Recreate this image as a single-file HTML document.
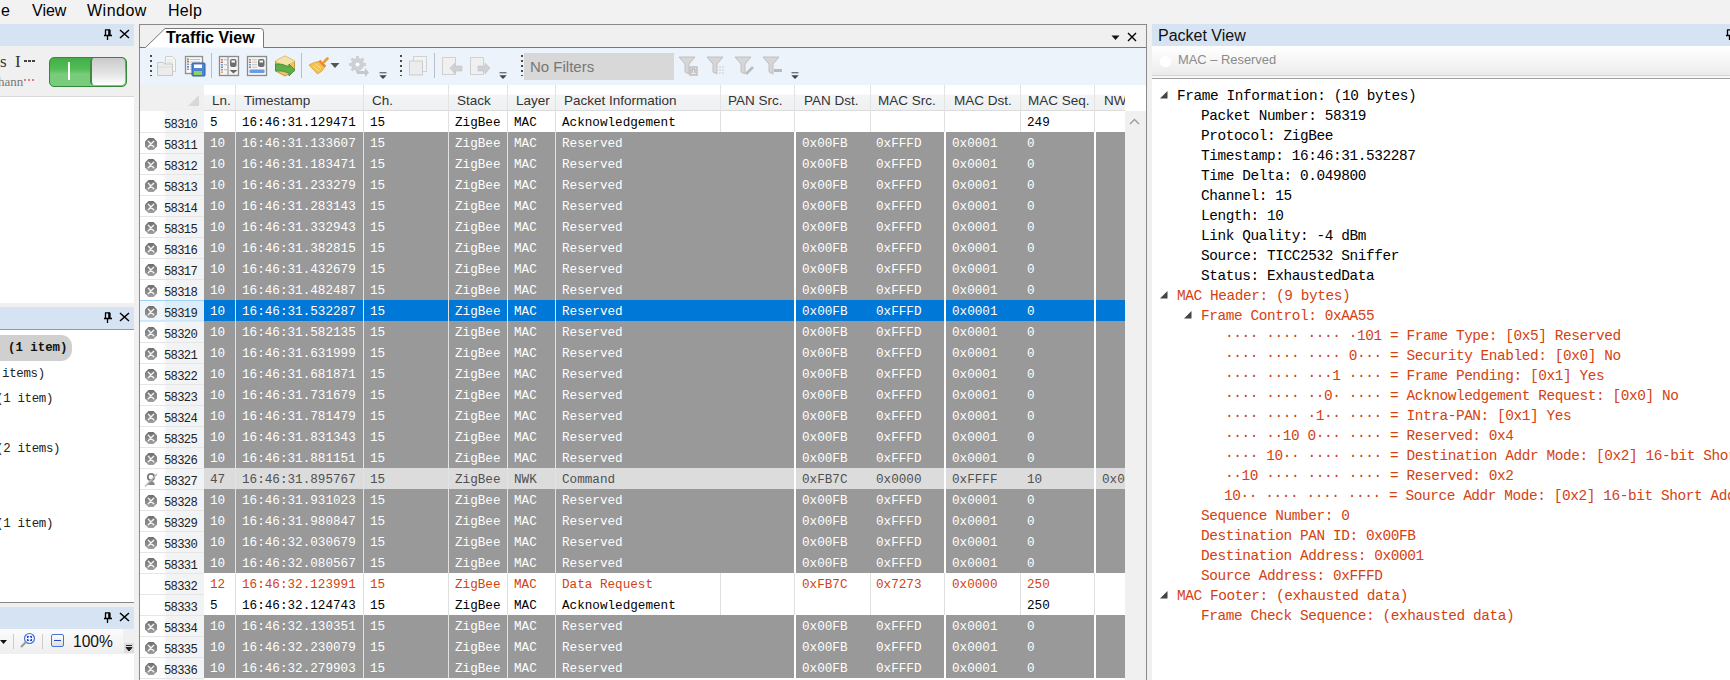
<!DOCTYPE html><html><head><meta charset="utf-8"><style>
*{margin:0;padding:0;box-sizing:border-box}
html,body{width:1730px;height:680px;overflow:hidden;background:#f0f0f0;font-family:'Liberation Sans', sans-serif;position:relative}
.ab{position:absolute}
.t{position:absolute;white-space:pre;line-height:1}
.m{font-family:'Liberation Mono', monospace}
.hdr{background:#d6e3f2}
.cell{position:absolute;white-space:pre;font-family:'Liberation Mono', monospace;font-size:12.65px;line-height:23px}
.ch{position:absolute;white-space:pre;font-family:'Liberation Sans', sans-serif;font-size:13.5px;line-height:26px;color:#333}
.pv{position:absolute;white-space:pre;font-family:'Liberation Mono', monospace;font-size:14.4px;letter-spacing:-0.39px;line-height:20px}
.red{color:#d4410f}
</style></head><body>
<div class="ab" style="left:0;top:0;width:1730px;height:24px;background:#f2f2f2"></div>
<div class="t" style="left:1px;top:3px;font-size:16px;letter-spacing:0px;color:#000">e</div>
<div class="t" style="left:32px;top:3px;font-size:16px;letter-spacing:0px;color:#000">View</div>
<div class="t" style="left:87px;top:3px;font-size:16px;letter-spacing:0.5px;color:#000">Window</div>
<div class="t" style="left:168px;top:3px;font-size:16px;letter-spacing:0.3px;color:#000">Help</div>
<div class="ab hdr" style="left:0;top:24px;width:134px;height:22px"></div>
<svg class="ab" style="left:103px;top:29px" width="10" height="12" viewBox="0 0 10 12"><path d="M2.5 0.8v5.4M2 0.8h5M7 0.8v5.4M1 6.5h8M4.5 6.5v4.5" stroke="#000" stroke-width="1.3" fill="none"/><rect x="5.2" y="0.8" width="1.8" height="5.5" fill="#000"/></svg>
<svg class="ab" style="left:119px;top:29px" width="11" height="10" viewBox="0 0 11 10"><path d="M1 1L10 9M10 1L1 9" stroke="#000" stroke-width="1.5"/></svg>
<div class="t" style="left:0px;top:53px;font-family:'Liberation Serif', serif;font-size:17px;color:#333">s</div>
<div class="t" style="left:15px;top:53px;font-family:'Liberation Serif', serif;font-size:17px;color:#333">I</div>
<div class="ab" style="left:24px;top:60px;width:12px;height:2px;background:repeating-linear-gradient(90deg,#444 0,#444 3px,transparent 3px,transparent 4px)"></div>
<div class="t" style="left:-2px;top:75px;font-family:'Liberation Serif', serif;font-size:13px;color:#777">hann</div>
<div class="ab" style="left:24px;top:79px;width:10px;height:2px;background:repeating-linear-gradient(90deg,#e77 0,#e77 2px,transparent 2px,transparent 4px)"></div>
<div class="ab" style="left:49px;top:57px;width:78px;height:30px;border-radius:5px;background:linear-gradient(#45ac49,#50be55 40%,#7acb7c 58%,#78cc7b);border:1px solid #33883a"></div>
<div class="ab" style="left:68px;top:62px;width:2px;height:18px;background:#fff"></div>
<div class="ab" style="left:90px;top:58px;width:35px;height:27px;border-radius:4px;background:linear-gradient(#cbcbcb,#e2e2e2 55%,#fff);border-left:2px solid #3c8a40"></div>
<div class="ab" style="left:0;top:96px;width:134px;height:1px;background:#d9d9d9"></div>
<div class="ab" style="left:0;top:97px;width:134px;height:206px;background:#fff"></div>
<div class="ab hdr" style="left:0;top:307px;width:134px;height:22px"></div>
<div class="ab" style="left:0;top:329px;width:134px;height:1px;background:#8c9aa8"></div>
<svg class="ab" style="left:103px;top:312px" width="10" height="12" viewBox="0 0 10 12"><path d="M2.5 0.8v5.4M2 0.8h5M7 0.8v5.4M1 6.5h8M4.5 6.5v4.5" stroke="#000" stroke-width="1.3" fill="none"/><rect x="5.2" y="0.8" width="1.8" height="5.5" fill="#000"/></svg>
<svg class="ab" style="left:119px;top:312px" width="11" height="10" viewBox="0 0 11 10"><path d="M1 1L10 9M10 1L1 9" stroke="#000" stroke-width="1.5"/></svg>
<div class="ab" style="left:0;top:330px;width:134px;height:272px;background:#fff"></div>
<div class="ab" style="left:-10px;top:335px;width:82px;height:26px;border-radius:11px;background:#d0d0d0"></div>
<div class="t" style="left:8px;top:342px;font-family:'Liberation Mono', monospace;font-weight:bold;font-size:12.4px;color:#111">(1 item)</div>
<div class="t" style="left:2px;top:368px;font-family:'Liberation Mono', monospace;font-size:12.4px;letter-spacing:-0.3px;color:#222">items)</div>
<div class="t" style="left:-4px;top:393px;font-family:'Liberation Mono', monospace;font-size:12.4px;letter-spacing:-0.3px;color:#222">(1 item)</div>
<div class="t" style="left:-4px;top:443px;font-family:'Liberation Mono', monospace;font-size:12.4px;letter-spacing:-0.3px;color:#222">(2 items)</div>
<div class="t" style="left:-4px;top:518px;font-family:'Liberation Mono', monospace;font-size:12.4px;letter-spacing:-0.3px;color:#222">(1 item)</div>
<div class="ab" style="left:0;top:602px;width:134px;height:1px;background:#888"></div>
<div class="ab hdr" style="left:0;top:607px;width:134px;height:22px"></div>
<svg class="ab" style="left:103px;top:612px" width="10" height="12" viewBox="0 0 10 12"><path d="M2.5 0.8v5.4M2 0.8h5M7 0.8v5.4M1 6.5h8M4.5 6.5v4.5" stroke="#000" stroke-width="1.3" fill="none"/><rect x="5.2" y="0.8" width="1.8" height="5.5" fill="#000"/></svg>
<svg class="ab" style="left:119px;top:612px" width="11" height="10" viewBox="0 0 11 10"><path d="M1 1L10 9M10 1L1 9" stroke="#000" stroke-width="1.5"/></svg>
<div class="ab" style="left:0;top:629px;width:123px;height:25px;background:linear-gradient(#fbfbfb,#efefef)"></div>
<div class="ab" style="left:0;top:654px;width:134px;height:26px;background:#fff"></div>
<svg class="ab" style="left:0;top:639px" width="8" height="6"><path d="M0 1h7L3.5 5z" fill="#111"/></svg>
<div class="ab" style="left:13px;top:634px;width:1px;height:15px;background:#ccc"></div>
<svg class="ab" style="left:19px;top:632px" width="18" height="18" viewBox="0 0 18 18"><circle cx="10.5" cy="6.5" r="5" fill="#eef4ff" stroke="#4a72e0" stroke-width="1.2"/><path d="M7 10L2 15" stroke="#999" stroke-width="2"/><path d="M8.6 5.9V4.6H9.9M11.1 4.6H12.4V5.9M12.4 7.1V8.4H11.1M9.9 8.4H8.6V7.1" stroke="#1f44c0" stroke-width="1.2" fill="none"/></svg>
<div class="ab" style="left:42px;top:634px;width:1px;height:15px;background:#ccc"></div>
<div class="ab" style="left:51px;top:634px;width:13px;height:13px;border:1.5px solid #4a72d8;border-radius:2px;background:linear-gradient(#fff,#ddd)"></div>
<div class="ab" style="left:54px;top:640px;width:7px;height:1.3px;background:#2a4cb8"></div>
<div class="t" style="left:73px;top:634px;font-size:15.6px;color:#111">100%</div>
<div class="ab" style="left:124px;top:643px;width:10px;height:10px;background:#ddd"></div>
<svg class="ab" style="left:125px;top:645px" width="8" height="7"><path d="M1 0.5h6M1 2.5h6L4 6z" stroke="#222" fill="#222" stroke-width="1"/></svg>
<div class="ab" style="left:134px;top:24px;width:6px;height:656px;background:#f0f0f0"></div>
<div class="ab" style="left:139px;top:24px;width:1008px;height:656px;border:1px solid #8a8a8a;border-bottom:none;background:#f0f0f0"></div>
<svg class="ab" style="left:139px;top:24px" width="1007" height="25"><path d="M6.5 23.5 L26 4.5 L121.5 4.5 Q124.5 4.5 124.5 7.5 L124.5 23.5" fill="#fff" stroke="#777" stroke-width="1"/><path d="M0 23.5H6.5M124.5 23.5H1007" stroke="#777" stroke-width="1.2"/></svg>
<div class="t" style="left:166px;top:30px;font-size:16px;font-weight:bold;color:#000">Traffic View</div>
<svg class="ab" style="left:1111px;top:35px" width="10" height="6"><path d="M0.5 0.5h8L4.5 5z" fill="#111"/></svg>
<svg class="ab" style="left:1127px;top:32px" width="10" height="10" viewBox="0 0 10 10"><path d="M1 1L9 9M9 1L1 9" stroke="#000" stroke-width="1.4"/></svg>
<div class="ab" style="left:140px;top:48px;width:1006px;height:37px;background:#edf3fb"></div>
<svg class="ab" style="left:150px;top:55px" width="3" height="22"><rect x="0" y="0" width="2" height="2" fill="#4a4a4a"/><rect x="0" y="5" width="2" height="2" fill="#4a4a4a"/><rect x="0" y="10" width="2" height="2" fill="#4a4a4a"/><rect x="0" y="15" width="2" height="2" fill="#4a4a4a"/><rect x="0" y="20" width="2" height="1" fill="#4a4a4a"/></svg>
<svg class="ab" style="left:156px;top:55px" width="22" height="22" viewBox="0 0 22 22"><path d="M9.5 1.5h7l3 3v12h-10z" fill="#f6f6f6" stroke="#cfcfcf"/><path d="M11 5h6M11 7.5h6M11 10h6" stroke="#e0e0e0"/><path d="M1.5 7.5h6l1 1.5h8v11.5h-15z" fill="#ececec" stroke="#c9c9c9"/><path d="M2 12h14" stroke="#dcdcdc"/></svg>
<svg class="ab" style="left:184px;top:55px" width="22" height="22" viewBox="0 0 22 22"><rect x="1.5" y="1.5" width="17" height="17" fill="#f7f7f7" stroke="#8f8f8f" stroke-width="1.3"/><rect x="3" y="3.5" width="2" height="2" fill="#58b858"/><rect x="3" y="6" width="2" height="1.5" fill="#e06060"/><rect x="3" y="8.5" width="2" height="1.5" fill="#6a9ae8"/><rect x="3" y="11" width="2" height="1.5" fill="#777"/><rect x="3" y="13.5" width="2" height="1.5" fill="#6a9ae8"/><path d="M6 4.5h10M6 7h10M6 9.5h4M6 12h4M6 14.5h4" stroke="#c4c4c4"/><rect x="8" y="8" width="13" height="13" rx="1" fill="#4f84d2" stroke="#2e5fae"/><rect x="10" y="9.5" width="8" height="3.5" fill="#fff"/><rect x="10" y="16" width="8" height="4" fill="#8fd060"/></svg>
<div class="ab" style="left:211px;top:53px;width:1px;height:25px;background:#b9bfc8"></div>
<svg class="ab" style="left:218px;top:55px" width="22" height="22" viewBox="0 0 22 22"><rect x="1.5" y="1.5" width="19" height="19" fill="#f4f4f4" stroke="#8a8a8a" stroke-width="1.3"/><path d="M10 1.5v19" stroke="#9a9a9a" stroke-width="1.2"/><rect x="3" y="4" width="2" height="1.5" fill="#58b858"/><rect x="3" y="6.5" width="2" height="1.5" fill="#e06060"/><rect x="3" y="9" width="2" height="1.5" fill="#6a9ae8"/><rect x="3" y="11.5" width="2" height="1.5" fill="#888"/><rect x="3" y="14" width="2" height="1.5" fill="#6a9ae8"/><rect x="3" y="16.5" width="2" height="1.5" fill="#f0a040"/><path d="M6 4.7h3M6 9.7h3M6 14.7h3" stroke="#bbb"/><rect x="12" y="4" width="6.5" height="8" rx="2" fill="#6e6e6e"/><rect x="13.5" y="5.5" width="3.5" height="2" fill="#fff"/><path d="M11.5 15h8l-4 3.5z" fill="#666"/></svg>
<svg class="ab" style="left:246px;top:55px" width="22" height="22" viewBox="0 0 22 22"><rect x="1.5" y="1.5" width="19" height="19" fill="#f4f4f4" stroke="#8a8a8a" stroke-width="1.3"/><rect x="3" y="4" width="2" height="1.5" fill="#58b858"/><rect x="3" y="6.5" width="2" height="1.5" fill="#e06060"/><rect x="3" y="9" width="2" height="1.5" fill="#6a9ae8"/><rect x="3" y="11.5" width="2" height="1.5" fill="#888"/><path d="M6 4.7h5M6 7.2h5M6 9.7h5M6 12.2h5" stroke="#c4c4c4"/><rect x="12" y="4" width="6.5" height="8" rx="2" fill="#6e6e6e"/><rect x="13.5" y="5.5" width="3.5" height="2" fill="#fff"/><rect x="3.5" y="14.5" width="15" height="3.5" rx="1" fill="#6b9be0"/></svg>
<svg class="ab" style="left:274px;top:55px" width="22" height="22" viewBox="0 0 22 22"><path d="M11 1L20.5 6V16L11 21L1.5 16V6Z" fill="#e9c468" stroke="#c99a38"/><path d="M11 1L20.5 6L11 11L1.5 6Z" fill="#f6e2a8"/><path d="M1.5 9Q8 8 15 12V9L21 15L15 21V18Q8 15 1.5 16Z" fill="#5fae4a" stroke="#3b8a2e" stroke-width="0.8"/></svg>
<div class="ab" style="left:301px;top:53px;width:1px;height:25px;background:#b9bfc8"></div>
<svg class="ab" style="left:308px;top:56px" width="34" height="20" viewBox="0 0 34 20"><path d="M19.5 2.5L16 6" stroke="#e0a040" stroke-width="2.6" stroke-linecap="round"/><path d="M11 5L17 11" stroke="#e88a3a" stroke-width="3.5"/><path d="M1 9Q6 6 10.5 5.5L16.5 11.5Q14 16 9.5 18Z" fill="#f2c24a" stroke="#d9a030" stroke-width="0.8"/><path d="M5 10L11 15M7.5 8L13 12.5" stroke="#fbe29a" stroke-width="1"/><path d="M22.5 7h9l-4.5 5z" fill="#555"/></svg>
<svg class="ab" style="left:348px;top:55px" width="22" height="22" viewBox="0 0 22 22"><g fill="#cdd0d4"><circle cx="9.5" cy="9.5" r="6.5"/><rect x="8" y="1" width="3" height="4"/><rect x="8" y="14" width="3" height="4"/><rect x="1" y="8" width="4" height="3"/><rect x="14" y="8" width="4" height="3"/><rect x="3" y="3" width="3" height="3" transform="rotate(45 4.5 4.5)"/><rect x="13" y="3" width="3" height="3" transform="rotate(45 14.5 4.5)"/><rect x="3" y="13" width="3" height="3" transform="rotate(45 4.5 14.5)"/></g><circle cx="9.5" cy="9.5" r="2" fill="#fff"/><path d="M9 16h8v-3l4 4.5-4 4.5v-3H9z" fill="#c4c7cc"/></svg>
<svg class="ab" style="left:379px;top:72px" width="8" height="8"><rect x="0.5" y="0.2" width="7" height="1.1" fill="#555"/><path d="M0.3 3.2h7.4L4 7z" fill="#444"/></svg>
<svg class="ab" style="left:400px;top:55px" width="3" height="22"><rect x="0" y="0" width="2" height="2" fill="#4a4a4a"/><rect x="0" y="5" width="2" height="2" fill="#4a4a4a"/><rect x="0" y="10" width="2" height="2" fill="#4a4a4a"/><rect x="0" y="15" width="2" height="2" fill="#4a4a4a"/><rect x="0" y="20" width="2" height="1" fill="#4a4a4a"/></svg>
<svg class="ab" style="left:408px;top:55px" width="20" height="22" viewBox="0 0 20 22"><rect x="5.5" y="1.5" width="13" height="15" fill="#f3f3f3" stroke="#d2d2d2"/><rect x="1.5" y="6" width="13" height="14" fill="#ececec" stroke="#cdcdcd"/></svg>
<div class="ab" style="left:434px;top:53px;width:1px;height:25px;background:#b9bfc8"></div>
<svg class="ab" style="left:441px;top:55px" width="22" height="22" viewBox="0 0 22 22"><path d="M1.5 2.5h13v17h-13z" fill="#f0f0f0" stroke="#d0d0d0"/><path d="M9 13l5-5v3h7v5h-7v3z" fill="#cfd1d4" stroke="#c0c2c6" stroke-width="0.6"/></svg>
<svg class="ab" style="left:469px;top:55px" width="22" height="22" viewBox="0 0 22 22"><path d="M1.5 2.5h13v17h-13z" fill="#f0f0f0" stroke="#d0d0d0"/><path d="M21 13l-5-5v3h-7v5h7v3z" fill="#cfd1d4" stroke="#c0c2c6" stroke-width="0.6"/></svg>
<svg class="ab" style="left:499px;top:72px" width="8" height="8"><rect x="0.5" y="0.2" width="7" height="1.1" fill="#555"/><path d="M0.3 3.2h7.4L4 7z" fill="#444"/></svg>
<svg class="ab" style="left:521px;top:55px" width="3" height="22"><rect x="0" y="0" width="2" height="2" fill="#4a4a4a"/><rect x="0" y="5" width="2" height="2" fill="#4a4a4a"/><rect x="0" y="10" width="2" height="2" fill="#4a4a4a"/><rect x="0" y="15" width="2" height="2" fill="#4a4a4a"/><rect x="0" y="20" width="2" height="1" fill="#4a4a4a"/></svg>
<div class="ab" style="left:524px;top:53px;width:150px;height:27px;background:#d8d8d8"></div>
<div class="t" style="left:530px;top:59px;font-size:15px;color:#777">No Filters</div>
<svg class="ab" style="left:678px;top:55px" width="22" height="22" viewBox="0 0 22 22"><path d="M1 2h16l-6 7v10l-4-2V9Z" fill="#d6d6d6" stroke="#c0c0c0"/><rect x="12" y="12" width="7" height="8" fill="#e6e6e6" stroke="#b8b8b8" stroke-width="1.3"/><path d="M14 18v-4h3v4" stroke="#aaa" fill="none"/></svg>
<svg class="ab" style="left:706px;top:55px" width="22" height="22" viewBox="0 0 22 22"><path d="M1 2h16l-6 7v10l-4-2V9Z" fill="#d6d6d6" stroke="#c0c0c0"/><path d="M13 12h6M13 15h6M13 18h6" stroke="#ccc" stroke-dasharray="2 1"/></svg>
<svg class="ab" style="left:734px;top:55px" width="22" height="22" viewBox="0 0 22 22"><path d="M1 2h16l-6 7v10l-4-2V9Z" fill="#d6d6d6" stroke="#c0c0c0"/><path d="M12 19L19 12" stroke="#bbb" stroke-width="2.5"/></svg>
<svg class="ab" style="left:762px;top:55px" width="22" height="22" viewBox="0 0 22 22"><path d="M1 2h16l-6 7v10l-4-2V9Z" fill="#d6d6d6" stroke="#c0c0c0"/><rect x="12" y="14" width="8" height="3" fill="#bbb"/></svg>
<svg class="ab" style="left:791px;top:72px" width="8" height="8"><rect x="0.5" y="0.2" width="7" height="1.1" fill="#555"/><path d="M0.3 3.2h7.4L4 7z" fill="#444"/></svg>
<div class="ab" style="left:140px;top:85px;width:64px;height:26px;background:#f0f0f0"></div>
<svg class="ab" style="left:187px;top:94px" width="13" height="13"><path d="M12 1V12H1Z" fill="#d8d8d8"/></svg>
<div class="ab" style="left:204px;top:85px;width:921px;height:26px;background:linear-gradient(#ffffff 0,#ffffff 36%,#f3f4f6 42%,#eef0f2 100%);border-bottom:1px solid #dcdcdc"></div>
<div class="ab" style="left:235px;top:85px;width:1px;height:26px;background:#e3e3e3"></div>
<div class="ab" style="left:363px;top:85px;width:1px;height:26px;background:#e3e3e3"></div>
<div class="ab" style="left:448px;top:85px;width:1px;height:26px;background:#e3e3e3"></div>
<div class="ab" style="left:507px;top:85px;width:1px;height:26px;background:#e3e3e3"></div>
<div class="ab" style="left:555px;top:85px;width:1px;height:26px;background:#e3e3e3"></div>
<div class="ab" style="left:720px;top:85px;width:1px;height:26px;background:#e3e3e3"></div>
<div class="ab" style="left:794px;top:85px;width:1px;height:26px;background:#e3e3e3"></div>
<div class="ab" style="left:870px;top:85px;width:1px;height:26px;background:#e3e3e3"></div>
<div class="ab" style="left:944px;top:85px;width:1px;height:26px;background:#e3e3e3"></div>
<div class="ab" style="left:1020px;top:85px;width:1px;height:26px;background:#e3e3e3"></div>
<div class="ab" style="left:1094px;top:85px;width:1px;height:26px;background:#e3e3e3"></div>
<div class="ch" style="left:212px;top:88px">Ln.</div>
<div class="ch" style="left:244px;top:88px">Timestamp</div>
<div class="ch" style="left:372px;top:88px">Ch.</div>
<div class="ch" style="left:457px;top:88px">Stack</div>
<div class="ch" style="left:516px;top:88px">Layer</div>
<div class="ch" style="left:564px;top:88px">Packet Information</div>
<div class="ch" style="left:728px;top:88px">PAN Src.</div>
<div class="ch" style="left:804px;top:88px">PAN Dst.</div>
<div class="ch" style="left:878px;top:88px">MAC Src.</div>
<div class="ch" style="left:954px;top:88px">MAC Dst.</div>
<div class="ch" style="left:1028px;top:88px">MAC Seq.</div>
<div class="ch" style="left:1104px;top:88px">NW</div>
<div class="ab" style="left:1125px;top:85px;width:21px;height:26px;background:#fff"></div>
<div class="ab" style="left:204px;top:111px;width:921px;height:569px;background:#fff"></div>
<div class="ab" style="left:140px;top:111px;width:64px;height:569px;background:linear-gradient(90deg,#fff 0,#fff 23px,#f2f3f5 27px,#f2f3f5)"></div>
<div class="ab" style="left:140px;top:132px;width:64px;height:1px;background:#e6e6e6"></div>
<div class="t m" style="left:141px;top:111px;width:56px;text-align:right;font-size:12.2px;letter-spacing:-0.7px;line-height:28px;color:#222">58310</div>
<div class="ab" style="left:204px;top:111px;width:921px;height:21px;background:#fff"></div>
<div class="ab" style="left:235px;top:111px;width:1px;height:21px;background:#dfdfdf"></div>
<div class="ab" style="left:363px;top:111px;width:1px;height:21px;background:#dfdfdf"></div>
<div class="ab" style="left:448px;top:111px;width:1px;height:21px;background:#dfdfdf"></div>
<div class="ab" style="left:507px;top:111px;width:1px;height:21px;background:#dfdfdf"></div>
<div class="ab" style="left:555px;top:111px;width:1px;height:21px;background:#dfdfdf"></div>
<div class="ab" style="left:720px;top:111px;width:1px;height:21px;background:#dfdfdf"></div>
<div class="ab" style="left:794px;top:111px;width:1px;height:21px;background:#dfdfdf"></div>
<div class="ab" style="left:870px;top:111px;width:1px;height:21px;background:#dfdfdf"></div>
<div class="ab" style="left:944px;top:111px;width:1px;height:21px;background:#dfdfdf"></div>
<div class="ab" style="left:1020px;top:111px;width:1px;height:21px;background:#dfdfdf"></div>
<div class="ab" style="left:1094px;top:111px;width:1px;height:21px;background:#dfdfdf"></div>
<div class="cell" style="left:210px;top:111px;color:#000">5</div>
<div class="cell" style="left:242px;top:111px;color:#000">16:46:31.129471</div>
<div class="cell" style="left:370px;top:111px;color:#000">15</div>
<div class="cell" style="left:455px;top:111px;color:#000">ZigBee</div>
<div class="cell" style="left:514px;top:111px;color:#000">MAC</div>
<div class="cell" style="left:562px;top:111px;color:#000">Acknowledgement</div>
<div class="cell" style="left:1027px;top:111px;color:#000">249</div>
<div class="ab" style="left:140px;top:153px;width:64px;height:1px;background:#e6e6e6"></div>
<div class="t m" style="left:141px;top:132px;width:56px;text-align:right;font-size:12.2px;letter-spacing:-0.7px;line-height:28px;color:#222">58311</div>
<svg class="ab" style="left:145px;top:138px" width="12" height="12" viewBox="0 0 12 12"><defs><linearGradient id="og1" x1="0" y1="0" x2="0" y2="1"><stop offset="0" stop-color="#6e6e6e"/><stop offset="1" stop-color="#a0a0a0"/></linearGradient></defs><path d="M3.5 0H8.5L12 3.5V8.5L8.5 12H3.5L0 8.5V3.5Z" fill="url(#og1)"/><path d="M3.3 3.3L8.7 8.7M8.7 3.3L3.3 8.7" stroke="#f4f4f4" stroke-width="1.4" stroke-linecap="round"/></svg>
<div class="ab" style="left:204px;top:132px;width:921px;height:21px;background:#999999"></div>
<div class="ab" style="left:235px;top:132px;width:1px;height:21px;background:#e2e2e2"></div>
<div class="ab" style="left:363px;top:132px;width:1px;height:21px;background:#e2e2e2"></div>
<div class="ab" style="left:448px;top:132px;width:1px;height:21px;background:#e2e2e2"></div>
<div class="ab" style="left:507px;top:132px;width:1px;height:21px;background:#e2e2e2"></div>
<div class="ab" style="left:555px;top:132px;width:1px;height:21px;background:#e2e2e2"></div>
<div class="ab" style="left:794px;top:132px;width:2px;height:21px;background:#fff"></div>
<div class="ab" style="left:944px;top:132px;width:2px;height:21px;background:#fff"></div>
<div class="ab" style="left:1094px;top:132px;width:2px;height:21px;background:#fff"></div>
<div class="cell" style="left:210px;top:132px;color:#fff">10</div>
<div class="cell" style="left:242px;top:132px;color:#fff">16:46:31.133607</div>
<div class="cell" style="left:370px;top:132px;color:#fff">15</div>
<div class="cell" style="left:455px;top:132px;color:#fff">ZigBee</div>
<div class="cell" style="left:514px;top:132px;color:#fff">MAC</div>
<div class="cell" style="left:562px;top:132px;color:#fff">Reserved</div>
<div class="cell" style="left:802px;top:132px;color:#fff">0x00FB</div>
<div class="cell" style="left:876px;top:132px;color:#fff">0xFFFD</div>
<div class="cell" style="left:952px;top:132px;color:#fff">0x0001</div>
<div class="cell" style="left:1027px;top:132px;color:#fff">0</div>
<div class="ab" style="left:140px;top:174px;width:64px;height:1px;background:#e6e6e6"></div>
<div class="t m" style="left:141px;top:153px;width:56px;text-align:right;font-size:12.2px;letter-spacing:-0.7px;line-height:28px;color:#222">58312</div>
<svg class="ab" style="left:145px;top:159px" width="12" height="12" viewBox="0 0 12 12"><defs><linearGradient id="og2" x1="0" y1="0" x2="0" y2="1"><stop offset="0" stop-color="#6e6e6e"/><stop offset="1" stop-color="#a0a0a0"/></linearGradient></defs><path d="M3.5 0H8.5L12 3.5V8.5L8.5 12H3.5L0 8.5V3.5Z" fill="url(#og2)"/><path d="M3.3 3.3L8.7 8.7M8.7 3.3L3.3 8.7" stroke="#f4f4f4" stroke-width="1.4" stroke-linecap="round"/></svg>
<div class="ab" style="left:204px;top:153px;width:921px;height:21px;background:#999999"></div>
<div class="ab" style="left:235px;top:153px;width:1px;height:21px;background:#e2e2e2"></div>
<div class="ab" style="left:363px;top:153px;width:1px;height:21px;background:#e2e2e2"></div>
<div class="ab" style="left:448px;top:153px;width:1px;height:21px;background:#e2e2e2"></div>
<div class="ab" style="left:507px;top:153px;width:1px;height:21px;background:#e2e2e2"></div>
<div class="ab" style="left:555px;top:153px;width:1px;height:21px;background:#e2e2e2"></div>
<div class="ab" style="left:794px;top:153px;width:2px;height:21px;background:#fff"></div>
<div class="ab" style="left:944px;top:153px;width:2px;height:21px;background:#fff"></div>
<div class="ab" style="left:1094px;top:153px;width:2px;height:21px;background:#fff"></div>
<div class="cell" style="left:210px;top:153px;color:#fff">10</div>
<div class="cell" style="left:242px;top:153px;color:#fff">16:46:31.183471</div>
<div class="cell" style="left:370px;top:153px;color:#fff">15</div>
<div class="cell" style="left:455px;top:153px;color:#fff">ZigBee</div>
<div class="cell" style="left:514px;top:153px;color:#fff">MAC</div>
<div class="cell" style="left:562px;top:153px;color:#fff">Reserved</div>
<div class="cell" style="left:802px;top:153px;color:#fff">0x00FB</div>
<div class="cell" style="left:876px;top:153px;color:#fff">0xFFFD</div>
<div class="cell" style="left:952px;top:153px;color:#fff">0x0001</div>
<div class="cell" style="left:1027px;top:153px;color:#fff">0</div>
<div class="ab" style="left:140px;top:195px;width:64px;height:1px;background:#e6e6e6"></div>
<div class="t m" style="left:141px;top:174px;width:56px;text-align:right;font-size:12.2px;letter-spacing:-0.7px;line-height:28px;color:#222">58313</div>
<svg class="ab" style="left:145px;top:180px" width="12" height="12" viewBox="0 0 12 12"><defs><linearGradient id="og3" x1="0" y1="0" x2="0" y2="1"><stop offset="0" stop-color="#6e6e6e"/><stop offset="1" stop-color="#a0a0a0"/></linearGradient></defs><path d="M3.5 0H8.5L12 3.5V8.5L8.5 12H3.5L0 8.5V3.5Z" fill="url(#og3)"/><path d="M3.3 3.3L8.7 8.7M8.7 3.3L3.3 8.7" stroke="#f4f4f4" stroke-width="1.4" stroke-linecap="round"/></svg>
<div class="ab" style="left:204px;top:174px;width:921px;height:21px;background:#999999"></div>
<div class="ab" style="left:235px;top:174px;width:1px;height:21px;background:#e2e2e2"></div>
<div class="ab" style="left:363px;top:174px;width:1px;height:21px;background:#e2e2e2"></div>
<div class="ab" style="left:448px;top:174px;width:1px;height:21px;background:#e2e2e2"></div>
<div class="ab" style="left:507px;top:174px;width:1px;height:21px;background:#e2e2e2"></div>
<div class="ab" style="left:555px;top:174px;width:1px;height:21px;background:#e2e2e2"></div>
<div class="ab" style="left:794px;top:174px;width:2px;height:21px;background:#fff"></div>
<div class="ab" style="left:944px;top:174px;width:2px;height:21px;background:#fff"></div>
<div class="ab" style="left:1094px;top:174px;width:2px;height:21px;background:#fff"></div>
<div class="cell" style="left:210px;top:174px;color:#fff">10</div>
<div class="cell" style="left:242px;top:174px;color:#fff">16:46:31.233279</div>
<div class="cell" style="left:370px;top:174px;color:#fff">15</div>
<div class="cell" style="left:455px;top:174px;color:#fff">ZigBee</div>
<div class="cell" style="left:514px;top:174px;color:#fff">MAC</div>
<div class="cell" style="left:562px;top:174px;color:#fff">Reserved</div>
<div class="cell" style="left:802px;top:174px;color:#fff">0x00FB</div>
<div class="cell" style="left:876px;top:174px;color:#fff">0xFFFD</div>
<div class="cell" style="left:952px;top:174px;color:#fff">0x0001</div>
<div class="cell" style="left:1027px;top:174px;color:#fff">0</div>
<div class="ab" style="left:140px;top:216px;width:64px;height:1px;background:#e6e6e6"></div>
<div class="t m" style="left:141px;top:195px;width:56px;text-align:right;font-size:12.2px;letter-spacing:-0.7px;line-height:28px;color:#222">58314</div>
<svg class="ab" style="left:145px;top:201px" width="12" height="12" viewBox="0 0 12 12"><defs><linearGradient id="og4" x1="0" y1="0" x2="0" y2="1"><stop offset="0" stop-color="#6e6e6e"/><stop offset="1" stop-color="#a0a0a0"/></linearGradient></defs><path d="M3.5 0H8.5L12 3.5V8.5L8.5 12H3.5L0 8.5V3.5Z" fill="url(#og4)"/><path d="M3.3 3.3L8.7 8.7M8.7 3.3L3.3 8.7" stroke="#f4f4f4" stroke-width="1.4" stroke-linecap="round"/></svg>
<div class="ab" style="left:204px;top:195px;width:921px;height:21px;background:#999999"></div>
<div class="ab" style="left:235px;top:195px;width:1px;height:21px;background:#e2e2e2"></div>
<div class="ab" style="left:363px;top:195px;width:1px;height:21px;background:#e2e2e2"></div>
<div class="ab" style="left:448px;top:195px;width:1px;height:21px;background:#e2e2e2"></div>
<div class="ab" style="left:507px;top:195px;width:1px;height:21px;background:#e2e2e2"></div>
<div class="ab" style="left:555px;top:195px;width:1px;height:21px;background:#e2e2e2"></div>
<div class="ab" style="left:794px;top:195px;width:2px;height:21px;background:#fff"></div>
<div class="ab" style="left:944px;top:195px;width:2px;height:21px;background:#fff"></div>
<div class="ab" style="left:1094px;top:195px;width:2px;height:21px;background:#fff"></div>
<div class="cell" style="left:210px;top:195px;color:#fff">10</div>
<div class="cell" style="left:242px;top:195px;color:#fff">16:46:31.283143</div>
<div class="cell" style="left:370px;top:195px;color:#fff">15</div>
<div class="cell" style="left:455px;top:195px;color:#fff">ZigBee</div>
<div class="cell" style="left:514px;top:195px;color:#fff">MAC</div>
<div class="cell" style="left:562px;top:195px;color:#fff">Reserved</div>
<div class="cell" style="left:802px;top:195px;color:#fff">0x00FB</div>
<div class="cell" style="left:876px;top:195px;color:#fff">0xFFFD</div>
<div class="cell" style="left:952px;top:195px;color:#fff">0x0001</div>
<div class="cell" style="left:1027px;top:195px;color:#fff">0</div>
<div class="ab" style="left:140px;top:237px;width:64px;height:1px;background:#e6e6e6"></div>
<div class="t m" style="left:141px;top:216px;width:56px;text-align:right;font-size:12.2px;letter-spacing:-0.7px;line-height:28px;color:#222">58315</div>
<svg class="ab" style="left:145px;top:222px" width="12" height="12" viewBox="0 0 12 12"><defs><linearGradient id="og5" x1="0" y1="0" x2="0" y2="1"><stop offset="0" stop-color="#6e6e6e"/><stop offset="1" stop-color="#a0a0a0"/></linearGradient></defs><path d="M3.5 0H8.5L12 3.5V8.5L8.5 12H3.5L0 8.5V3.5Z" fill="url(#og5)"/><path d="M3.3 3.3L8.7 8.7M8.7 3.3L3.3 8.7" stroke="#f4f4f4" stroke-width="1.4" stroke-linecap="round"/></svg>
<div class="ab" style="left:204px;top:216px;width:921px;height:21px;background:#999999"></div>
<div class="ab" style="left:235px;top:216px;width:1px;height:21px;background:#e2e2e2"></div>
<div class="ab" style="left:363px;top:216px;width:1px;height:21px;background:#e2e2e2"></div>
<div class="ab" style="left:448px;top:216px;width:1px;height:21px;background:#e2e2e2"></div>
<div class="ab" style="left:507px;top:216px;width:1px;height:21px;background:#e2e2e2"></div>
<div class="ab" style="left:555px;top:216px;width:1px;height:21px;background:#e2e2e2"></div>
<div class="ab" style="left:794px;top:216px;width:2px;height:21px;background:#fff"></div>
<div class="ab" style="left:944px;top:216px;width:2px;height:21px;background:#fff"></div>
<div class="ab" style="left:1094px;top:216px;width:2px;height:21px;background:#fff"></div>
<div class="cell" style="left:210px;top:216px;color:#fff">10</div>
<div class="cell" style="left:242px;top:216px;color:#fff">16:46:31.332943</div>
<div class="cell" style="left:370px;top:216px;color:#fff">15</div>
<div class="cell" style="left:455px;top:216px;color:#fff">ZigBee</div>
<div class="cell" style="left:514px;top:216px;color:#fff">MAC</div>
<div class="cell" style="left:562px;top:216px;color:#fff">Reserved</div>
<div class="cell" style="left:802px;top:216px;color:#fff">0x00FB</div>
<div class="cell" style="left:876px;top:216px;color:#fff">0xFFFD</div>
<div class="cell" style="left:952px;top:216px;color:#fff">0x0001</div>
<div class="cell" style="left:1027px;top:216px;color:#fff">0</div>
<div class="ab" style="left:140px;top:258px;width:64px;height:1px;background:#e6e6e6"></div>
<div class="t m" style="left:141px;top:237px;width:56px;text-align:right;font-size:12.2px;letter-spacing:-0.7px;line-height:28px;color:#222">58316</div>
<svg class="ab" style="left:145px;top:243px" width="12" height="12" viewBox="0 0 12 12"><defs><linearGradient id="og6" x1="0" y1="0" x2="0" y2="1"><stop offset="0" stop-color="#6e6e6e"/><stop offset="1" stop-color="#a0a0a0"/></linearGradient></defs><path d="M3.5 0H8.5L12 3.5V8.5L8.5 12H3.5L0 8.5V3.5Z" fill="url(#og6)"/><path d="M3.3 3.3L8.7 8.7M8.7 3.3L3.3 8.7" stroke="#f4f4f4" stroke-width="1.4" stroke-linecap="round"/></svg>
<div class="ab" style="left:204px;top:237px;width:921px;height:21px;background:#999999"></div>
<div class="ab" style="left:235px;top:237px;width:1px;height:21px;background:#e2e2e2"></div>
<div class="ab" style="left:363px;top:237px;width:1px;height:21px;background:#e2e2e2"></div>
<div class="ab" style="left:448px;top:237px;width:1px;height:21px;background:#e2e2e2"></div>
<div class="ab" style="left:507px;top:237px;width:1px;height:21px;background:#e2e2e2"></div>
<div class="ab" style="left:555px;top:237px;width:1px;height:21px;background:#e2e2e2"></div>
<div class="ab" style="left:794px;top:237px;width:2px;height:21px;background:#fff"></div>
<div class="ab" style="left:944px;top:237px;width:2px;height:21px;background:#fff"></div>
<div class="ab" style="left:1094px;top:237px;width:2px;height:21px;background:#fff"></div>
<div class="cell" style="left:210px;top:237px;color:#fff">10</div>
<div class="cell" style="left:242px;top:237px;color:#fff">16:46:31.382815</div>
<div class="cell" style="left:370px;top:237px;color:#fff">15</div>
<div class="cell" style="left:455px;top:237px;color:#fff">ZigBee</div>
<div class="cell" style="left:514px;top:237px;color:#fff">MAC</div>
<div class="cell" style="left:562px;top:237px;color:#fff">Reserved</div>
<div class="cell" style="left:802px;top:237px;color:#fff">0x00FB</div>
<div class="cell" style="left:876px;top:237px;color:#fff">0xFFFD</div>
<div class="cell" style="left:952px;top:237px;color:#fff">0x0001</div>
<div class="cell" style="left:1027px;top:237px;color:#fff">0</div>
<div class="ab" style="left:140px;top:279px;width:64px;height:1px;background:#e6e6e6"></div>
<div class="t m" style="left:141px;top:258px;width:56px;text-align:right;font-size:12.2px;letter-spacing:-0.7px;line-height:28px;color:#222">58317</div>
<svg class="ab" style="left:145px;top:264px" width="12" height="12" viewBox="0 0 12 12"><defs><linearGradient id="og7" x1="0" y1="0" x2="0" y2="1"><stop offset="0" stop-color="#6e6e6e"/><stop offset="1" stop-color="#a0a0a0"/></linearGradient></defs><path d="M3.5 0H8.5L12 3.5V8.5L8.5 12H3.5L0 8.5V3.5Z" fill="url(#og7)"/><path d="M3.3 3.3L8.7 8.7M8.7 3.3L3.3 8.7" stroke="#f4f4f4" stroke-width="1.4" stroke-linecap="round"/></svg>
<div class="ab" style="left:204px;top:258px;width:921px;height:21px;background:#999999"></div>
<div class="ab" style="left:235px;top:258px;width:1px;height:21px;background:#e2e2e2"></div>
<div class="ab" style="left:363px;top:258px;width:1px;height:21px;background:#e2e2e2"></div>
<div class="ab" style="left:448px;top:258px;width:1px;height:21px;background:#e2e2e2"></div>
<div class="ab" style="left:507px;top:258px;width:1px;height:21px;background:#e2e2e2"></div>
<div class="ab" style="left:555px;top:258px;width:1px;height:21px;background:#e2e2e2"></div>
<div class="ab" style="left:794px;top:258px;width:2px;height:21px;background:#fff"></div>
<div class="ab" style="left:944px;top:258px;width:2px;height:21px;background:#fff"></div>
<div class="ab" style="left:1094px;top:258px;width:2px;height:21px;background:#fff"></div>
<div class="cell" style="left:210px;top:258px;color:#fff">10</div>
<div class="cell" style="left:242px;top:258px;color:#fff">16:46:31.432679</div>
<div class="cell" style="left:370px;top:258px;color:#fff">15</div>
<div class="cell" style="left:455px;top:258px;color:#fff">ZigBee</div>
<div class="cell" style="left:514px;top:258px;color:#fff">MAC</div>
<div class="cell" style="left:562px;top:258px;color:#fff">Reserved</div>
<div class="cell" style="left:802px;top:258px;color:#fff">0x00FB</div>
<div class="cell" style="left:876px;top:258px;color:#fff">0xFFFD</div>
<div class="cell" style="left:952px;top:258px;color:#fff">0x0001</div>
<div class="cell" style="left:1027px;top:258px;color:#fff">0</div>
<div class="ab" style="left:140px;top:300px;width:64px;height:1px;background:#e6e6e6"></div>
<div class="t m" style="left:141px;top:279px;width:56px;text-align:right;font-size:12.2px;letter-spacing:-0.7px;line-height:28px;color:#222">58318</div>
<svg class="ab" style="left:145px;top:285px" width="12" height="12" viewBox="0 0 12 12"><defs><linearGradient id="og8" x1="0" y1="0" x2="0" y2="1"><stop offset="0" stop-color="#6e6e6e"/><stop offset="1" stop-color="#a0a0a0"/></linearGradient></defs><path d="M3.5 0H8.5L12 3.5V8.5L8.5 12H3.5L0 8.5V3.5Z" fill="url(#og8)"/><path d="M3.3 3.3L8.7 8.7M8.7 3.3L3.3 8.7" stroke="#f4f4f4" stroke-width="1.4" stroke-linecap="round"/></svg>
<div class="ab" style="left:204px;top:279px;width:921px;height:21px;background:#999999"></div>
<div class="ab" style="left:235px;top:279px;width:1px;height:21px;background:#e2e2e2"></div>
<div class="ab" style="left:363px;top:279px;width:1px;height:21px;background:#e2e2e2"></div>
<div class="ab" style="left:448px;top:279px;width:1px;height:21px;background:#e2e2e2"></div>
<div class="ab" style="left:507px;top:279px;width:1px;height:21px;background:#e2e2e2"></div>
<div class="ab" style="left:555px;top:279px;width:1px;height:21px;background:#e2e2e2"></div>
<div class="ab" style="left:794px;top:279px;width:2px;height:21px;background:#fff"></div>
<div class="ab" style="left:944px;top:279px;width:2px;height:21px;background:#fff"></div>
<div class="ab" style="left:1094px;top:279px;width:2px;height:21px;background:#fff"></div>
<div class="cell" style="left:210px;top:279px;color:#fff">10</div>
<div class="cell" style="left:242px;top:279px;color:#fff">16:46:31.482487</div>
<div class="cell" style="left:370px;top:279px;color:#fff">15</div>
<div class="cell" style="left:455px;top:279px;color:#fff">ZigBee</div>
<div class="cell" style="left:514px;top:279px;color:#fff">MAC</div>
<div class="cell" style="left:562px;top:279px;color:#fff">Reserved</div>
<div class="cell" style="left:802px;top:279px;color:#fff">0x00FB</div>
<div class="cell" style="left:876px;top:279px;color:#fff">0xFFFD</div>
<div class="cell" style="left:952px;top:279px;color:#fff">0x0001</div>
<div class="cell" style="left:1027px;top:279px;color:#fff">0</div>
<div class="ab" style="left:140px;top:321px;width:64px;height:1px;background:#e6e6e6"></div>
<div class="ab" style="left:140px;top:300px;width:64px;height:21px;background:linear-gradient(90deg,#eef6fc 0,#eef6fc 23px,#dcedf9 27px,#dcedf9);border-top:1px solid #9fd3f5;border-bottom:1px solid #cfe8f9"></div>
<div class="t m" style="left:141px;top:300px;width:56px;text-align:right;font-size:12.2px;letter-spacing:-0.7px;line-height:28px;color:#222">58319</div>
<svg class="ab" style="left:145px;top:306px" width="12" height="12" viewBox="0 0 12 12"><defs><linearGradient id="og9" x1="0" y1="0" x2="0" y2="1"><stop offset="0" stop-color="#6e6e6e"/><stop offset="1" stop-color="#a0a0a0"/></linearGradient></defs><path d="M3.5 0H8.5L12 3.5V8.5L8.5 12H3.5L0 8.5V3.5Z" fill="url(#og9)"/><path d="M3.3 3.3L8.7 8.7M8.7 3.3L3.3 8.7" stroke="#f4f4f4" stroke-width="1.4" stroke-linecap="round"/></svg>
<div class="ab" style="left:204px;top:300px;width:921px;height:21px;background:#0078d7"></div>
<div class="ab" style="left:235px;top:300px;width:1px;height:21px;background:#e2e2e2"></div>
<div class="ab" style="left:363px;top:300px;width:1px;height:21px;background:#e2e2e2"></div>
<div class="ab" style="left:448px;top:300px;width:1px;height:21px;background:#e2e2e2"></div>
<div class="ab" style="left:507px;top:300px;width:1px;height:21px;background:#e2e2e2"></div>
<div class="ab" style="left:555px;top:300px;width:1px;height:21px;background:#e2e2e2"></div>
<div class="ab" style="left:794px;top:300px;width:2px;height:21px;background:#fff"></div>
<div class="ab" style="left:944px;top:300px;width:2px;height:21px;background:#fff"></div>
<div class="ab" style="left:1094px;top:300px;width:2px;height:21px;background:#fff"></div>
<div class="cell" style="left:210px;top:300px;color:#fff">10</div>
<div class="cell" style="left:242px;top:300px;color:#fff">16:46:31.532287</div>
<div class="cell" style="left:370px;top:300px;color:#fff">15</div>
<div class="cell" style="left:455px;top:300px;color:#fff">ZigBee</div>
<div class="cell" style="left:514px;top:300px;color:#fff">MAC</div>
<div class="cell" style="left:562px;top:300px;color:#fff">Reserved</div>
<div class="cell" style="left:802px;top:300px;color:#fff">0x00FB</div>
<div class="cell" style="left:876px;top:300px;color:#fff">0xFFFD</div>
<div class="cell" style="left:952px;top:300px;color:#fff">0x0001</div>
<div class="cell" style="left:1027px;top:300px;color:#fff">0</div>
<div class="ab" style="left:140px;top:342px;width:64px;height:1px;background:#e6e6e6"></div>
<div class="t m" style="left:141px;top:321px;width:56px;text-align:right;font-size:12.2px;letter-spacing:-0.7px;line-height:28px;color:#222">58320</div>
<svg class="ab" style="left:145px;top:327px" width="12" height="12" viewBox="0 0 12 12"><defs><linearGradient id="og10" x1="0" y1="0" x2="0" y2="1"><stop offset="0" stop-color="#6e6e6e"/><stop offset="1" stop-color="#a0a0a0"/></linearGradient></defs><path d="M3.5 0H8.5L12 3.5V8.5L8.5 12H3.5L0 8.5V3.5Z" fill="url(#og10)"/><path d="M3.3 3.3L8.7 8.7M8.7 3.3L3.3 8.7" stroke="#f4f4f4" stroke-width="1.4" stroke-linecap="round"/></svg>
<div class="ab" style="left:204px;top:321px;width:921px;height:21px;background:#999999"></div>
<div class="ab" style="left:235px;top:321px;width:1px;height:21px;background:#e2e2e2"></div>
<div class="ab" style="left:363px;top:321px;width:1px;height:21px;background:#e2e2e2"></div>
<div class="ab" style="left:448px;top:321px;width:1px;height:21px;background:#e2e2e2"></div>
<div class="ab" style="left:507px;top:321px;width:1px;height:21px;background:#e2e2e2"></div>
<div class="ab" style="left:555px;top:321px;width:1px;height:21px;background:#e2e2e2"></div>
<div class="ab" style="left:794px;top:321px;width:2px;height:21px;background:#fff"></div>
<div class="ab" style="left:944px;top:321px;width:2px;height:21px;background:#fff"></div>
<div class="ab" style="left:1094px;top:321px;width:2px;height:21px;background:#fff"></div>
<div class="cell" style="left:210px;top:321px;color:#fff">10</div>
<div class="cell" style="left:242px;top:321px;color:#fff">16:46:31.582135</div>
<div class="cell" style="left:370px;top:321px;color:#fff">15</div>
<div class="cell" style="left:455px;top:321px;color:#fff">ZigBee</div>
<div class="cell" style="left:514px;top:321px;color:#fff">MAC</div>
<div class="cell" style="left:562px;top:321px;color:#fff">Reserved</div>
<div class="cell" style="left:802px;top:321px;color:#fff">0x00FB</div>
<div class="cell" style="left:876px;top:321px;color:#fff">0xFFFD</div>
<div class="cell" style="left:952px;top:321px;color:#fff">0x0001</div>
<div class="cell" style="left:1027px;top:321px;color:#fff">0</div>
<div class="ab" style="left:140px;top:363px;width:64px;height:1px;background:#e6e6e6"></div>
<div class="t m" style="left:141px;top:342px;width:56px;text-align:right;font-size:12.2px;letter-spacing:-0.7px;line-height:28px;color:#222">58321</div>
<svg class="ab" style="left:145px;top:348px" width="12" height="12" viewBox="0 0 12 12"><defs><linearGradient id="og11" x1="0" y1="0" x2="0" y2="1"><stop offset="0" stop-color="#6e6e6e"/><stop offset="1" stop-color="#a0a0a0"/></linearGradient></defs><path d="M3.5 0H8.5L12 3.5V8.5L8.5 12H3.5L0 8.5V3.5Z" fill="url(#og11)"/><path d="M3.3 3.3L8.7 8.7M8.7 3.3L3.3 8.7" stroke="#f4f4f4" stroke-width="1.4" stroke-linecap="round"/></svg>
<div class="ab" style="left:204px;top:342px;width:921px;height:21px;background:#999999"></div>
<div class="ab" style="left:235px;top:342px;width:1px;height:21px;background:#e2e2e2"></div>
<div class="ab" style="left:363px;top:342px;width:1px;height:21px;background:#e2e2e2"></div>
<div class="ab" style="left:448px;top:342px;width:1px;height:21px;background:#e2e2e2"></div>
<div class="ab" style="left:507px;top:342px;width:1px;height:21px;background:#e2e2e2"></div>
<div class="ab" style="left:555px;top:342px;width:1px;height:21px;background:#e2e2e2"></div>
<div class="ab" style="left:794px;top:342px;width:2px;height:21px;background:#fff"></div>
<div class="ab" style="left:944px;top:342px;width:2px;height:21px;background:#fff"></div>
<div class="ab" style="left:1094px;top:342px;width:2px;height:21px;background:#fff"></div>
<div class="cell" style="left:210px;top:342px;color:#fff">10</div>
<div class="cell" style="left:242px;top:342px;color:#fff">16:46:31.631999</div>
<div class="cell" style="left:370px;top:342px;color:#fff">15</div>
<div class="cell" style="left:455px;top:342px;color:#fff">ZigBee</div>
<div class="cell" style="left:514px;top:342px;color:#fff">MAC</div>
<div class="cell" style="left:562px;top:342px;color:#fff">Reserved</div>
<div class="cell" style="left:802px;top:342px;color:#fff">0x00FB</div>
<div class="cell" style="left:876px;top:342px;color:#fff">0xFFFD</div>
<div class="cell" style="left:952px;top:342px;color:#fff">0x0001</div>
<div class="cell" style="left:1027px;top:342px;color:#fff">0</div>
<div class="ab" style="left:140px;top:384px;width:64px;height:1px;background:#e6e6e6"></div>
<div class="t m" style="left:141px;top:363px;width:56px;text-align:right;font-size:12.2px;letter-spacing:-0.7px;line-height:28px;color:#222">58322</div>
<svg class="ab" style="left:145px;top:369px" width="12" height="12" viewBox="0 0 12 12"><defs><linearGradient id="og12" x1="0" y1="0" x2="0" y2="1"><stop offset="0" stop-color="#6e6e6e"/><stop offset="1" stop-color="#a0a0a0"/></linearGradient></defs><path d="M3.5 0H8.5L12 3.5V8.5L8.5 12H3.5L0 8.5V3.5Z" fill="url(#og12)"/><path d="M3.3 3.3L8.7 8.7M8.7 3.3L3.3 8.7" stroke="#f4f4f4" stroke-width="1.4" stroke-linecap="round"/></svg>
<div class="ab" style="left:204px;top:363px;width:921px;height:21px;background:#999999"></div>
<div class="ab" style="left:235px;top:363px;width:1px;height:21px;background:#e2e2e2"></div>
<div class="ab" style="left:363px;top:363px;width:1px;height:21px;background:#e2e2e2"></div>
<div class="ab" style="left:448px;top:363px;width:1px;height:21px;background:#e2e2e2"></div>
<div class="ab" style="left:507px;top:363px;width:1px;height:21px;background:#e2e2e2"></div>
<div class="ab" style="left:555px;top:363px;width:1px;height:21px;background:#e2e2e2"></div>
<div class="ab" style="left:794px;top:363px;width:2px;height:21px;background:#fff"></div>
<div class="ab" style="left:944px;top:363px;width:2px;height:21px;background:#fff"></div>
<div class="ab" style="left:1094px;top:363px;width:2px;height:21px;background:#fff"></div>
<div class="cell" style="left:210px;top:363px;color:#fff">10</div>
<div class="cell" style="left:242px;top:363px;color:#fff">16:46:31.681871</div>
<div class="cell" style="left:370px;top:363px;color:#fff">15</div>
<div class="cell" style="left:455px;top:363px;color:#fff">ZigBee</div>
<div class="cell" style="left:514px;top:363px;color:#fff">MAC</div>
<div class="cell" style="left:562px;top:363px;color:#fff">Reserved</div>
<div class="cell" style="left:802px;top:363px;color:#fff">0x00FB</div>
<div class="cell" style="left:876px;top:363px;color:#fff">0xFFFD</div>
<div class="cell" style="left:952px;top:363px;color:#fff">0x0001</div>
<div class="cell" style="left:1027px;top:363px;color:#fff">0</div>
<div class="ab" style="left:140px;top:405px;width:64px;height:1px;background:#e6e6e6"></div>
<div class="t m" style="left:141px;top:384px;width:56px;text-align:right;font-size:12.2px;letter-spacing:-0.7px;line-height:28px;color:#222">58323</div>
<svg class="ab" style="left:145px;top:390px" width="12" height="12" viewBox="0 0 12 12"><defs><linearGradient id="og13" x1="0" y1="0" x2="0" y2="1"><stop offset="0" stop-color="#6e6e6e"/><stop offset="1" stop-color="#a0a0a0"/></linearGradient></defs><path d="M3.5 0H8.5L12 3.5V8.5L8.5 12H3.5L0 8.5V3.5Z" fill="url(#og13)"/><path d="M3.3 3.3L8.7 8.7M8.7 3.3L3.3 8.7" stroke="#f4f4f4" stroke-width="1.4" stroke-linecap="round"/></svg>
<div class="ab" style="left:204px;top:384px;width:921px;height:21px;background:#999999"></div>
<div class="ab" style="left:235px;top:384px;width:1px;height:21px;background:#e2e2e2"></div>
<div class="ab" style="left:363px;top:384px;width:1px;height:21px;background:#e2e2e2"></div>
<div class="ab" style="left:448px;top:384px;width:1px;height:21px;background:#e2e2e2"></div>
<div class="ab" style="left:507px;top:384px;width:1px;height:21px;background:#e2e2e2"></div>
<div class="ab" style="left:555px;top:384px;width:1px;height:21px;background:#e2e2e2"></div>
<div class="ab" style="left:794px;top:384px;width:2px;height:21px;background:#fff"></div>
<div class="ab" style="left:944px;top:384px;width:2px;height:21px;background:#fff"></div>
<div class="ab" style="left:1094px;top:384px;width:2px;height:21px;background:#fff"></div>
<div class="cell" style="left:210px;top:384px;color:#fff">10</div>
<div class="cell" style="left:242px;top:384px;color:#fff">16:46:31.731679</div>
<div class="cell" style="left:370px;top:384px;color:#fff">15</div>
<div class="cell" style="left:455px;top:384px;color:#fff">ZigBee</div>
<div class="cell" style="left:514px;top:384px;color:#fff">MAC</div>
<div class="cell" style="left:562px;top:384px;color:#fff">Reserved</div>
<div class="cell" style="left:802px;top:384px;color:#fff">0x00FB</div>
<div class="cell" style="left:876px;top:384px;color:#fff">0xFFFD</div>
<div class="cell" style="left:952px;top:384px;color:#fff">0x0001</div>
<div class="cell" style="left:1027px;top:384px;color:#fff">0</div>
<div class="ab" style="left:140px;top:426px;width:64px;height:1px;background:#e6e6e6"></div>
<div class="t m" style="left:141px;top:405px;width:56px;text-align:right;font-size:12.2px;letter-spacing:-0.7px;line-height:28px;color:#222">58324</div>
<svg class="ab" style="left:145px;top:411px" width="12" height="12" viewBox="0 0 12 12"><defs><linearGradient id="og14" x1="0" y1="0" x2="0" y2="1"><stop offset="0" stop-color="#6e6e6e"/><stop offset="1" stop-color="#a0a0a0"/></linearGradient></defs><path d="M3.5 0H8.5L12 3.5V8.5L8.5 12H3.5L0 8.5V3.5Z" fill="url(#og14)"/><path d="M3.3 3.3L8.7 8.7M8.7 3.3L3.3 8.7" stroke="#f4f4f4" stroke-width="1.4" stroke-linecap="round"/></svg>
<div class="ab" style="left:204px;top:405px;width:921px;height:21px;background:#999999"></div>
<div class="ab" style="left:235px;top:405px;width:1px;height:21px;background:#e2e2e2"></div>
<div class="ab" style="left:363px;top:405px;width:1px;height:21px;background:#e2e2e2"></div>
<div class="ab" style="left:448px;top:405px;width:1px;height:21px;background:#e2e2e2"></div>
<div class="ab" style="left:507px;top:405px;width:1px;height:21px;background:#e2e2e2"></div>
<div class="ab" style="left:555px;top:405px;width:1px;height:21px;background:#e2e2e2"></div>
<div class="ab" style="left:794px;top:405px;width:2px;height:21px;background:#fff"></div>
<div class="ab" style="left:944px;top:405px;width:2px;height:21px;background:#fff"></div>
<div class="ab" style="left:1094px;top:405px;width:2px;height:21px;background:#fff"></div>
<div class="cell" style="left:210px;top:405px;color:#fff">10</div>
<div class="cell" style="left:242px;top:405px;color:#fff">16:46:31.781479</div>
<div class="cell" style="left:370px;top:405px;color:#fff">15</div>
<div class="cell" style="left:455px;top:405px;color:#fff">ZigBee</div>
<div class="cell" style="left:514px;top:405px;color:#fff">MAC</div>
<div class="cell" style="left:562px;top:405px;color:#fff">Reserved</div>
<div class="cell" style="left:802px;top:405px;color:#fff">0x00FB</div>
<div class="cell" style="left:876px;top:405px;color:#fff">0xFFFD</div>
<div class="cell" style="left:952px;top:405px;color:#fff">0x0001</div>
<div class="cell" style="left:1027px;top:405px;color:#fff">0</div>
<div class="ab" style="left:140px;top:447px;width:64px;height:1px;background:#e6e6e6"></div>
<div class="t m" style="left:141px;top:426px;width:56px;text-align:right;font-size:12.2px;letter-spacing:-0.7px;line-height:28px;color:#222">58325</div>
<svg class="ab" style="left:145px;top:432px" width="12" height="12" viewBox="0 0 12 12"><defs><linearGradient id="og15" x1="0" y1="0" x2="0" y2="1"><stop offset="0" stop-color="#6e6e6e"/><stop offset="1" stop-color="#a0a0a0"/></linearGradient></defs><path d="M3.5 0H8.5L12 3.5V8.5L8.5 12H3.5L0 8.5V3.5Z" fill="url(#og15)"/><path d="M3.3 3.3L8.7 8.7M8.7 3.3L3.3 8.7" stroke="#f4f4f4" stroke-width="1.4" stroke-linecap="round"/></svg>
<div class="ab" style="left:204px;top:426px;width:921px;height:21px;background:#999999"></div>
<div class="ab" style="left:235px;top:426px;width:1px;height:21px;background:#e2e2e2"></div>
<div class="ab" style="left:363px;top:426px;width:1px;height:21px;background:#e2e2e2"></div>
<div class="ab" style="left:448px;top:426px;width:1px;height:21px;background:#e2e2e2"></div>
<div class="ab" style="left:507px;top:426px;width:1px;height:21px;background:#e2e2e2"></div>
<div class="ab" style="left:555px;top:426px;width:1px;height:21px;background:#e2e2e2"></div>
<div class="ab" style="left:794px;top:426px;width:2px;height:21px;background:#fff"></div>
<div class="ab" style="left:944px;top:426px;width:2px;height:21px;background:#fff"></div>
<div class="ab" style="left:1094px;top:426px;width:2px;height:21px;background:#fff"></div>
<div class="cell" style="left:210px;top:426px;color:#fff">10</div>
<div class="cell" style="left:242px;top:426px;color:#fff">16:46:31.831343</div>
<div class="cell" style="left:370px;top:426px;color:#fff">15</div>
<div class="cell" style="left:455px;top:426px;color:#fff">ZigBee</div>
<div class="cell" style="left:514px;top:426px;color:#fff">MAC</div>
<div class="cell" style="left:562px;top:426px;color:#fff">Reserved</div>
<div class="cell" style="left:802px;top:426px;color:#fff">0x00FB</div>
<div class="cell" style="left:876px;top:426px;color:#fff">0xFFFD</div>
<div class="cell" style="left:952px;top:426px;color:#fff">0x0001</div>
<div class="cell" style="left:1027px;top:426px;color:#fff">0</div>
<div class="ab" style="left:140px;top:468px;width:64px;height:1px;background:#e6e6e6"></div>
<div class="t m" style="left:141px;top:447px;width:56px;text-align:right;font-size:12.2px;letter-spacing:-0.7px;line-height:28px;color:#222">58326</div>
<svg class="ab" style="left:145px;top:453px" width="12" height="12" viewBox="0 0 12 12"><defs><linearGradient id="og16" x1="0" y1="0" x2="0" y2="1"><stop offset="0" stop-color="#6e6e6e"/><stop offset="1" stop-color="#a0a0a0"/></linearGradient></defs><path d="M3.5 0H8.5L12 3.5V8.5L8.5 12H3.5L0 8.5V3.5Z" fill="url(#og16)"/><path d="M3.3 3.3L8.7 8.7M8.7 3.3L3.3 8.7" stroke="#f4f4f4" stroke-width="1.4" stroke-linecap="round"/></svg>
<div class="ab" style="left:204px;top:447px;width:921px;height:21px;background:#999999"></div>
<div class="ab" style="left:235px;top:447px;width:1px;height:21px;background:#e2e2e2"></div>
<div class="ab" style="left:363px;top:447px;width:1px;height:21px;background:#e2e2e2"></div>
<div class="ab" style="left:448px;top:447px;width:1px;height:21px;background:#e2e2e2"></div>
<div class="ab" style="left:507px;top:447px;width:1px;height:21px;background:#e2e2e2"></div>
<div class="ab" style="left:555px;top:447px;width:1px;height:21px;background:#e2e2e2"></div>
<div class="ab" style="left:794px;top:447px;width:2px;height:21px;background:#fff"></div>
<div class="ab" style="left:944px;top:447px;width:2px;height:21px;background:#fff"></div>
<div class="ab" style="left:1094px;top:447px;width:2px;height:21px;background:#fff"></div>
<div class="cell" style="left:210px;top:447px;color:#fff">10</div>
<div class="cell" style="left:242px;top:447px;color:#fff">16:46:31.881151</div>
<div class="cell" style="left:370px;top:447px;color:#fff">15</div>
<div class="cell" style="left:455px;top:447px;color:#fff">ZigBee</div>
<div class="cell" style="left:514px;top:447px;color:#fff">MAC</div>
<div class="cell" style="left:562px;top:447px;color:#fff">Reserved</div>
<div class="cell" style="left:802px;top:447px;color:#fff">0x00FB</div>
<div class="cell" style="left:876px;top:447px;color:#fff">0xFFFD</div>
<div class="cell" style="left:952px;top:447px;color:#fff">0x0001</div>
<div class="cell" style="left:1027px;top:447px;color:#fff">0</div>
<div class="ab" style="left:140px;top:489px;width:64px;height:1px;background:#e6e6e6"></div>
<div class="t m" style="left:141px;top:468px;width:56px;text-align:right;font-size:12.2px;letter-spacing:-0.7px;line-height:28px;color:#222">58327</div>
<svg class="ab" style="left:144px;top:472px" width="14" height="15" viewBox="0 0 14 15"><circle cx="7" cy="5" r="3.2" fill="none" stroke="#777" stroke-width="1.8"/><path d="M3 13Q4 9 7 9Q10 9 11 13Z" fill="#888"/><path d="M1 14.5L13 2" stroke="#bbb" stroke-width="1.5"/></svg>
<div class="ab" style="left:204px;top:468px;width:921px;height:21px;background:#dcdcdc"></div>
<div class="ab" style="left:235px;top:468px;width:1px;height:21px;background:#e2e2e2"></div>
<div class="ab" style="left:363px;top:468px;width:1px;height:21px;background:#e2e2e2"></div>
<div class="ab" style="left:448px;top:468px;width:1px;height:21px;background:#e2e2e2"></div>
<div class="ab" style="left:507px;top:468px;width:1px;height:21px;background:#e2e2e2"></div>
<div class="ab" style="left:555px;top:468px;width:1px;height:21px;background:#e2e2e2"></div>
<div class="ab" style="left:794px;top:468px;width:2px;height:21px;background:#fff"></div>
<div class="ab" style="left:944px;top:468px;width:2px;height:21px;background:#fff"></div>
<div class="ab" style="left:1094px;top:468px;width:2px;height:21px;background:#fff"></div>
<div class="cell" style="left:210px;top:468px;color:#505050">47</div>
<div class="cell" style="left:242px;top:468px;color:#505050">16:46:31.895767</div>
<div class="cell" style="left:370px;top:468px;color:#505050">15</div>
<div class="cell" style="left:455px;top:468px;color:#505050">ZigBee</div>
<div class="cell" style="left:514px;top:468px;color:#505050">NWK</div>
<div class="cell" style="left:562px;top:468px;color:#505050">Command</div>
<div class="cell" style="left:802px;top:468px;color:#505050">0xFB7C</div>
<div class="cell" style="left:876px;top:468px;color:#505050">0x0000</div>
<div class="cell" style="left:952px;top:468px;color:#505050">0xFFFF</div>
<div class="cell" style="left:1027px;top:468px;color:#505050">10</div>
<div class="cell" style="left:1102px;top:468px;color:#505050">0x0</div>
<div class="ab" style="left:140px;top:510px;width:64px;height:1px;background:#e6e6e6"></div>
<div class="t m" style="left:141px;top:489px;width:56px;text-align:right;font-size:12.2px;letter-spacing:-0.7px;line-height:28px;color:#222">58328</div>
<svg class="ab" style="left:145px;top:495px" width="12" height="12" viewBox="0 0 12 12"><defs><linearGradient id="og18" x1="0" y1="0" x2="0" y2="1"><stop offset="0" stop-color="#6e6e6e"/><stop offset="1" stop-color="#a0a0a0"/></linearGradient></defs><path d="M3.5 0H8.5L12 3.5V8.5L8.5 12H3.5L0 8.5V3.5Z" fill="url(#og18)"/><path d="M3.3 3.3L8.7 8.7M8.7 3.3L3.3 8.7" stroke="#f4f4f4" stroke-width="1.4" stroke-linecap="round"/></svg>
<div class="ab" style="left:204px;top:489px;width:921px;height:21px;background:#999999"></div>
<div class="ab" style="left:235px;top:489px;width:1px;height:21px;background:#e2e2e2"></div>
<div class="ab" style="left:363px;top:489px;width:1px;height:21px;background:#e2e2e2"></div>
<div class="ab" style="left:448px;top:489px;width:1px;height:21px;background:#e2e2e2"></div>
<div class="ab" style="left:507px;top:489px;width:1px;height:21px;background:#e2e2e2"></div>
<div class="ab" style="left:555px;top:489px;width:1px;height:21px;background:#e2e2e2"></div>
<div class="ab" style="left:794px;top:489px;width:2px;height:21px;background:#fff"></div>
<div class="ab" style="left:944px;top:489px;width:2px;height:21px;background:#fff"></div>
<div class="ab" style="left:1094px;top:489px;width:2px;height:21px;background:#fff"></div>
<div class="cell" style="left:210px;top:489px;color:#fff">10</div>
<div class="cell" style="left:242px;top:489px;color:#fff">16:46:31.931023</div>
<div class="cell" style="left:370px;top:489px;color:#fff">15</div>
<div class="cell" style="left:455px;top:489px;color:#fff">ZigBee</div>
<div class="cell" style="left:514px;top:489px;color:#fff">MAC</div>
<div class="cell" style="left:562px;top:489px;color:#fff">Reserved</div>
<div class="cell" style="left:802px;top:489px;color:#fff">0x00FB</div>
<div class="cell" style="left:876px;top:489px;color:#fff">0xFFFD</div>
<div class="cell" style="left:952px;top:489px;color:#fff">0x0001</div>
<div class="cell" style="left:1027px;top:489px;color:#fff">0</div>
<div class="ab" style="left:140px;top:531px;width:64px;height:1px;background:#e6e6e6"></div>
<div class="t m" style="left:141px;top:510px;width:56px;text-align:right;font-size:12.2px;letter-spacing:-0.7px;line-height:28px;color:#222">58329</div>
<svg class="ab" style="left:145px;top:516px" width="12" height="12" viewBox="0 0 12 12"><defs><linearGradient id="og19" x1="0" y1="0" x2="0" y2="1"><stop offset="0" stop-color="#6e6e6e"/><stop offset="1" stop-color="#a0a0a0"/></linearGradient></defs><path d="M3.5 0H8.5L12 3.5V8.5L8.5 12H3.5L0 8.5V3.5Z" fill="url(#og19)"/><path d="M3.3 3.3L8.7 8.7M8.7 3.3L3.3 8.7" stroke="#f4f4f4" stroke-width="1.4" stroke-linecap="round"/></svg>
<div class="ab" style="left:204px;top:510px;width:921px;height:21px;background:#999999"></div>
<div class="ab" style="left:235px;top:510px;width:1px;height:21px;background:#e2e2e2"></div>
<div class="ab" style="left:363px;top:510px;width:1px;height:21px;background:#e2e2e2"></div>
<div class="ab" style="left:448px;top:510px;width:1px;height:21px;background:#e2e2e2"></div>
<div class="ab" style="left:507px;top:510px;width:1px;height:21px;background:#e2e2e2"></div>
<div class="ab" style="left:555px;top:510px;width:1px;height:21px;background:#e2e2e2"></div>
<div class="ab" style="left:794px;top:510px;width:2px;height:21px;background:#fff"></div>
<div class="ab" style="left:944px;top:510px;width:2px;height:21px;background:#fff"></div>
<div class="ab" style="left:1094px;top:510px;width:2px;height:21px;background:#fff"></div>
<div class="cell" style="left:210px;top:510px;color:#fff">10</div>
<div class="cell" style="left:242px;top:510px;color:#fff">16:46:31.980847</div>
<div class="cell" style="left:370px;top:510px;color:#fff">15</div>
<div class="cell" style="left:455px;top:510px;color:#fff">ZigBee</div>
<div class="cell" style="left:514px;top:510px;color:#fff">MAC</div>
<div class="cell" style="left:562px;top:510px;color:#fff">Reserved</div>
<div class="cell" style="left:802px;top:510px;color:#fff">0x00FB</div>
<div class="cell" style="left:876px;top:510px;color:#fff">0xFFFD</div>
<div class="cell" style="left:952px;top:510px;color:#fff">0x0001</div>
<div class="cell" style="left:1027px;top:510px;color:#fff">0</div>
<div class="ab" style="left:140px;top:552px;width:64px;height:1px;background:#e6e6e6"></div>
<div class="t m" style="left:141px;top:531px;width:56px;text-align:right;font-size:12.2px;letter-spacing:-0.7px;line-height:28px;color:#222">58330</div>
<svg class="ab" style="left:145px;top:537px" width="12" height="12" viewBox="0 0 12 12"><defs><linearGradient id="og20" x1="0" y1="0" x2="0" y2="1"><stop offset="0" stop-color="#6e6e6e"/><stop offset="1" stop-color="#a0a0a0"/></linearGradient></defs><path d="M3.5 0H8.5L12 3.5V8.5L8.5 12H3.5L0 8.5V3.5Z" fill="url(#og20)"/><path d="M3.3 3.3L8.7 8.7M8.7 3.3L3.3 8.7" stroke="#f4f4f4" stroke-width="1.4" stroke-linecap="round"/></svg>
<div class="ab" style="left:204px;top:531px;width:921px;height:21px;background:#999999"></div>
<div class="ab" style="left:235px;top:531px;width:1px;height:21px;background:#e2e2e2"></div>
<div class="ab" style="left:363px;top:531px;width:1px;height:21px;background:#e2e2e2"></div>
<div class="ab" style="left:448px;top:531px;width:1px;height:21px;background:#e2e2e2"></div>
<div class="ab" style="left:507px;top:531px;width:1px;height:21px;background:#e2e2e2"></div>
<div class="ab" style="left:555px;top:531px;width:1px;height:21px;background:#e2e2e2"></div>
<div class="ab" style="left:794px;top:531px;width:2px;height:21px;background:#fff"></div>
<div class="ab" style="left:944px;top:531px;width:2px;height:21px;background:#fff"></div>
<div class="ab" style="left:1094px;top:531px;width:2px;height:21px;background:#fff"></div>
<div class="cell" style="left:210px;top:531px;color:#fff">10</div>
<div class="cell" style="left:242px;top:531px;color:#fff">16:46:32.030679</div>
<div class="cell" style="left:370px;top:531px;color:#fff">15</div>
<div class="cell" style="left:455px;top:531px;color:#fff">ZigBee</div>
<div class="cell" style="left:514px;top:531px;color:#fff">MAC</div>
<div class="cell" style="left:562px;top:531px;color:#fff">Reserved</div>
<div class="cell" style="left:802px;top:531px;color:#fff">0x00FB</div>
<div class="cell" style="left:876px;top:531px;color:#fff">0xFFFD</div>
<div class="cell" style="left:952px;top:531px;color:#fff">0x0001</div>
<div class="cell" style="left:1027px;top:531px;color:#fff">0</div>
<div class="ab" style="left:140px;top:573px;width:64px;height:1px;background:#e6e6e6"></div>
<div class="t m" style="left:141px;top:552px;width:56px;text-align:right;font-size:12.2px;letter-spacing:-0.7px;line-height:28px;color:#222">58331</div>
<svg class="ab" style="left:145px;top:558px" width="12" height="12" viewBox="0 0 12 12"><defs><linearGradient id="og21" x1="0" y1="0" x2="0" y2="1"><stop offset="0" stop-color="#6e6e6e"/><stop offset="1" stop-color="#a0a0a0"/></linearGradient></defs><path d="M3.5 0H8.5L12 3.5V8.5L8.5 12H3.5L0 8.5V3.5Z" fill="url(#og21)"/><path d="M3.3 3.3L8.7 8.7M8.7 3.3L3.3 8.7" stroke="#f4f4f4" stroke-width="1.4" stroke-linecap="round"/></svg>
<div class="ab" style="left:204px;top:552px;width:921px;height:21px;background:#999999"></div>
<div class="ab" style="left:235px;top:552px;width:1px;height:21px;background:#e2e2e2"></div>
<div class="ab" style="left:363px;top:552px;width:1px;height:21px;background:#e2e2e2"></div>
<div class="ab" style="left:448px;top:552px;width:1px;height:21px;background:#e2e2e2"></div>
<div class="ab" style="left:507px;top:552px;width:1px;height:21px;background:#e2e2e2"></div>
<div class="ab" style="left:555px;top:552px;width:1px;height:21px;background:#e2e2e2"></div>
<div class="ab" style="left:794px;top:552px;width:2px;height:21px;background:#fff"></div>
<div class="ab" style="left:944px;top:552px;width:2px;height:21px;background:#fff"></div>
<div class="ab" style="left:1094px;top:552px;width:2px;height:21px;background:#fff"></div>
<div class="cell" style="left:210px;top:552px;color:#fff">10</div>
<div class="cell" style="left:242px;top:552px;color:#fff">16:46:32.080567</div>
<div class="cell" style="left:370px;top:552px;color:#fff">15</div>
<div class="cell" style="left:455px;top:552px;color:#fff">ZigBee</div>
<div class="cell" style="left:514px;top:552px;color:#fff">MAC</div>
<div class="cell" style="left:562px;top:552px;color:#fff">Reserved</div>
<div class="cell" style="left:802px;top:552px;color:#fff">0x00FB</div>
<div class="cell" style="left:876px;top:552px;color:#fff">0xFFFD</div>
<div class="cell" style="left:952px;top:552px;color:#fff">0x0001</div>
<div class="cell" style="left:1027px;top:552px;color:#fff">0</div>
<div class="ab" style="left:140px;top:594px;width:64px;height:1px;background:#e6e6e6"></div>
<div class="t m" style="left:141px;top:573px;width:56px;text-align:right;font-size:12.2px;letter-spacing:-0.7px;line-height:28px;color:#222">58332</div>
<div class="ab" style="left:204px;top:573px;width:921px;height:21px;background:#fff"></div>
<div class="ab" style="left:235px;top:573px;width:1px;height:21px;background:#dfdfdf"></div>
<div class="ab" style="left:363px;top:573px;width:1px;height:21px;background:#dfdfdf"></div>
<div class="ab" style="left:448px;top:573px;width:1px;height:21px;background:#dfdfdf"></div>
<div class="ab" style="left:507px;top:573px;width:1px;height:21px;background:#dfdfdf"></div>
<div class="ab" style="left:555px;top:573px;width:1px;height:21px;background:#dfdfdf"></div>
<div class="ab" style="left:720px;top:573px;width:1px;height:21px;background:#dfdfdf"></div>
<div class="ab" style="left:794px;top:573px;width:1px;height:21px;background:#dfdfdf"></div>
<div class="ab" style="left:870px;top:573px;width:1px;height:21px;background:#dfdfdf"></div>
<div class="ab" style="left:944px;top:573px;width:1px;height:21px;background:#dfdfdf"></div>
<div class="ab" style="left:1020px;top:573px;width:1px;height:21px;background:#dfdfdf"></div>
<div class="ab" style="left:1094px;top:573px;width:1px;height:21px;background:#dfdfdf"></div>
<div class="cell" style="left:210px;top:573px;color:#d4410f">12</div>
<div class="cell" style="left:242px;top:573px;color:#d4410f">16:46:32.123991</div>
<div class="cell" style="left:370px;top:573px;color:#d4410f">15</div>
<div class="cell" style="left:455px;top:573px;color:#d4410f">ZigBee</div>
<div class="cell" style="left:514px;top:573px;color:#d4410f">MAC</div>
<div class="cell" style="left:562px;top:573px;color:#d4410f">Data Request</div>
<div class="cell" style="left:802px;top:573px;color:#d4410f">0xFB7C</div>
<div class="cell" style="left:876px;top:573px;color:#d4410f">0x7273</div>
<div class="cell" style="left:952px;top:573px;color:#d4410f">0x0000</div>
<div class="cell" style="left:1027px;top:573px;color:#d4410f">250</div>
<div class="ab" style="left:140px;top:615px;width:64px;height:1px;background:#e6e6e6"></div>
<div class="t m" style="left:141px;top:594px;width:56px;text-align:right;font-size:12.2px;letter-spacing:-0.7px;line-height:28px;color:#222">58333</div>
<div class="ab" style="left:204px;top:594px;width:921px;height:21px;background:#fff"></div>
<div class="ab" style="left:235px;top:594px;width:1px;height:21px;background:#dfdfdf"></div>
<div class="ab" style="left:363px;top:594px;width:1px;height:21px;background:#dfdfdf"></div>
<div class="ab" style="left:448px;top:594px;width:1px;height:21px;background:#dfdfdf"></div>
<div class="ab" style="left:507px;top:594px;width:1px;height:21px;background:#dfdfdf"></div>
<div class="ab" style="left:555px;top:594px;width:1px;height:21px;background:#dfdfdf"></div>
<div class="ab" style="left:720px;top:594px;width:1px;height:21px;background:#dfdfdf"></div>
<div class="ab" style="left:794px;top:594px;width:1px;height:21px;background:#dfdfdf"></div>
<div class="ab" style="left:870px;top:594px;width:1px;height:21px;background:#dfdfdf"></div>
<div class="ab" style="left:944px;top:594px;width:1px;height:21px;background:#dfdfdf"></div>
<div class="ab" style="left:1020px;top:594px;width:1px;height:21px;background:#dfdfdf"></div>
<div class="ab" style="left:1094px;top:594px;width:1px;height:21px;background:#dfdfdf"></div>
<div class="cell" style="left:210px;top:594px;color:#000">5</div>
<div class="cell" style="left:242px;top:594px;color:#000">16:46:32.124743</div>
<div class="cell" style="left:370px;top:594px;color:#000">15</div>
<div class="cell" style="left:455px;top:594px;color:#000">ZigBee</div>
<div class="cell" style="left:514px;top:594px;color:#000">MAC</div>
<div class="cell" style="left:562px;top:594px;color:#000">Acknowledgement</div>
<div class="cell" style="left:1027px;top:594px;color:#000">250</div>
<div class="ab" style="left:140px;top:636px;width:64px;height:1px;background:#e6e6e6"></div>
<div class="t m" style="left:141px;top:615px;width:56px;text-align:right;font-size:12.2px;letter-spacing:-0.7px;line-height:28px;color:#222">58334</div>
<svg class="ab" style="left:145px;top:621px" width="12" height="12" viewBox="0 0 12 12"><defs><linearGradient id="og24" x1="0" y1="0" x2="0" y2="1"><stop offset="0" stop-color="#6e6e6e"/><stop offset="1" stop-color="#a0a0a0"/></linearGradient></defs><path d="M3.5 0H8.5L12 3.5V8.5L8.5 12H3.5L0 8.5V3.5Z" fill="url(#og24)"/><path d="M3.3 3.3L8.7 8.7M8.7 3.3L3.3 8.7" stroke="#f4f4f4" stroke-width="1.4" stroke-linecap="round"/></svg>
<div class="ab" style="left:204px;top:615px;width:921px;height:21px;background:#999999"></div>
<div class="ab" style="left:235px;top:615px;width:1px;height:21px;background:#e2e2e2"></div>
<div class="ab" style="left:363px;top:615px;width:1px;height:21px;background:#e2e2e2"></div>
<div class="ab" style="left:448px;top:615px;width:1px;height:21px;background:#e2e2e2"></div>
<div class="ab" style="left:507px;top:615px;width:1px;height:21px;background:#e2e2e2"></div>
<div class="ab" style="left:555px;top:615px;width:1px;height:21px;background:#e2e2e2"></div>
<div class="ab" style="left:794px;top:615px;width:2px;height:21px;background:#fff"></div>
<div class="ab" style="left:944px;top:615px;width:2px;height:21px;background:#fff"></div>
<div class="ab" style="left:1094px;top:615px;width:2px;height:21px;background:#fff"></div>
<div class="cell" style="left:210px;top:615px;color:#fff">10</div>
<div class="cell" style="left:242px;top:615px;color:#fff">16:46:32.130351</div>
<div class="cell" style="left:370px;top:615px;color:#fff">15</div>
<div class="cell" style="left:455px;top:615px;color:#fff">ZigBee</div>
<div class="cell" style="left:514px;top:615px;color:#fff">MAC</div>
<div class="cell" style="left:562px;top:615px;color:#fff">Reserved</div>
<div class="cell" style="left:802px;top:615px;color:#fff">0x00FB</div>
<div class="cell" style="left:876px;top:615px;color:#fff">0xFFFD</div>
<div class="cell" style="left:952px;top:615px;color:#fff">0x0001</div>
<div class="cell" style="left:1027px;top:615px;color:#fff">0</div>
<div class="ab" style="left:140px;top:657px;width:64px;height:1px;background:#e6e6e6"></div>
<div class="t m" style="left:141px;top:636px;width:56px;text-align:right;font-size:12.2px;letter-spacing:-0.7px;line-height:28px;color:#222">58335</div>
<svg class="ab" style="left:145px;top:642px" width="12" height="12" viewBox="0 0 12 12"><defs><linearGradient id="og25" x1="0" y1="0" x2="0" y2="1"><stop offset="0" stop-color="#6e6e6e"/><stop offset="1" stop-color="#a0a0a0"/></linearGradient></defs><path d="M3.5 0H8.5L12 3.5V8.5L8.5 12H3.5L0 8.5V3.5Z" fill="url(#og25)"/><path d="M3.3 3.3L8.7 8.7M8.7 3.3L3.3 8.7" stroke="#f4f4f4" stroke-width="1.4" stroke-linecap="round"/></svg>
<div class="ab" style="left:204px;top:636px;width:921px;height:21px;background:#999999"></div>
<div class="ab" style="left:235px;top:636px;width:1px;height:21px;background:#e2e2e2"></div>
<div class="ab" style="left:363px;top:636px;width:1px;height:21px;background:#e2e2e2"></div>
<div class="ab" style="left:448px;top:636px;width:1px;height:21px;background:#e2e2e2"></div>
<div class="ab" style="left:507px;top:636px;width:1px;height:21px;background:#e2e2e2"></div>
<div class="ab" style="left:555px;top:636px;width:1px;height:21px;background:#e2e2e2"></div>
<div class="ab" style="left:794px;top:636px;width:2px;height:21px;background:#fff"></div>
<div class="ab" style="left:944px;top:636px;width:2px;height:21px;background:#fff"></div>
<div class="ab" style="left:1094px;top:636px;width:2px;height:21px;background:#fff"></div>
<div class="cell" style="left:210px;top:636px;color:#fff">10</div>
<div class="cell" style="left:242px;top:636px;color:#fff">16:46:32.230079</div>
<div class="cell" style="left:370px;top:636px;color:#fff">15</div>
<div class="cell" style="left:455px;top:636px;color:#fff">ZigBee</div>
<div class="cell" style="left:514px;top:636px;color:#fff">MAC</div>
<div class="cell" style="left:562px;top:636px;color:#fff">Reserved</div>
<div class="cell" style="left:802px;top:636px;color:#fff">0x00FB</div>
<div class="cell" style="left:876px;top:636px;color:#fff">0xFFFD</div>
<div class="cell" style="left:952px;top:636px;color:#fff">0x0001</div>
<div class="cell" style="left:1027px;top:636px;color:#fff">0</div>
<div class="ab" style="left:140px;top:678px;width:64px;height:1px;background:#e6e6e6"></div>
<div class="t m" style="left:141px;top:657px;width:56px;text-align:right;font-size:12.2px;letter-spacing:-0.7px;line-height:28px;color:#222">58336</div>
<svg class="ab" style="left:145px;top:663px" width="12" height="12" viewBox="0 0 12 12"><defs><linearGradient id="og26" x1="0" y1="0" x2="0" y2="1"><stop offset="0" stop-color="#6e6e6e"/><stop offset="1" stop-color="#a0a0a0"/></linearGradient></defs><path d="M3.5 0H8.5L12 3.5V8.5L8.5 12H3.5L0 8.5V3.5Z" fill="url(#og26)"/><path d="M3.3 3.3L8.7 8.7M8.7 3.3L3.3 8.7" stroke="#f4f4f4" stroke-width="1.4" stroke-linecap="round"/></svg>
<div class="ab" style="left:204px;top:657px;width:921px;height:21px;background:#999999"></div>
<div class="ab" style="left:235px;top:657px;width:1px;height:21px;background:#e2e2e2"></div>
<div class="ab" style="left:363px;top:657px;width:1px;height:21px;background:#e2e2e2"></div>
<div class="ab" style="left:448px;top:657px;width:1px;height:21px;background:#e2e2e2"></div>
<div class="ab" style="left:507px;top:657px;width:1px;height:21px;background:#e2e2e2"></div>
<div class="ab" style="left:555px;top:657px;width:1px;height:21px;background:#e2e2e2"></div>
<div class="ab" style="left:794px;top:657px;width:2px;height:21px;background:#fff"></div>
<div class="ab" style="left:944px;top:657px;width:2px;height:21px;background:#fff"></div>
<div class="ab" style="left:1094px;top:657px;width:2px;height:21px;background:#fff"></div>
<div class="cell" style="left:210px;top:657px;color:#fff">10</div>
<div class="cell" style="left:242px;top:657px;color:#fff">16:46:32.279903</div>
<div class="cell" style="left:370px;top:657px;color:#fff">15</div>
<div class="cell" style="left:455px;top:657px;color:#fff">ZigBee</div>
<div class="cell" style="left:514px;top:657px;color:#fff">MAC</div>
<div class="cell" style="left:562px;top:657px;color:#fff">Reserved</div>
<div class="cell" style="left:802px;top:657px;color:#fff">0x00FB</div>
<div class="cell" style="left:876px;top:657px;color:#fff">0xFFFD</div>
<div class="cell" style="left:952px;top:657px;color:#fff">0x0001</div>
<div class="cell" style="left:1027px;top:657px;color:#fff">0</div>
<div class="ab" style="left:1125px;top:111px;width:21px;height:569px;background:#f0f0f0"></div>
<svg class="ab" style="left:1129px;top:118px" width="11" height="7"><path d="M1 6L5.5 1.5L10 6" stroke="#999" stroke-width="1.3" fill="none"/></svg>
<div class="ab" style="left:1146px;top:24px;width:1px;height:656px;background:#8a8a8a"></div>
<div class="ab" style="left:1147px;top:24px;width:5px;height:656px;background:#f0f0f0"></div>
<div class="ab hdr" style="left:1152px;top:24px;width:578px;height:22px"></div>
<div class="t" style="left:1158px;top:28px;font-size:16px;color:#111">Packet View</div>
<svg class="ab" style="left:1725px;top:29px" width="10" height="12" viewBox="0 0 10 12"><path d="M2.5 0.8v5.4M2 0.8h5M7 0.8v5.4M1 6.5h8M4.5 6.5v4.5" stroke="#000" stroke-width="1.3" fill="none"/><rect x="5.2" y="0.8" width="1.8" height="5.5" fill="#000"/></svg>
<div class="ab" style="left:1152px;top:46px;width:578px;height:29px;background:linear-gradient(#ffffff,#f4f4f4 60%,#ebebeb)"></div>
<div class="ab" style="left:1152px;top:75px;width:578px;height:1px;background:#d5d5d5"></div>
<div class="ab" style="left:1152px;top:76px;width:578px;height:2px;background:#f8f8f8"></div>
<div class="ab" style="left:1152px;top:78px;width:578px;height:1px;background:#a0a0a0"></div>
<div class="ab" style="left:1152px;top:79px;width:578px;height:601px;background:#fff"></div>
<div class="ab" style="left:1160px;top:56px;width:11px;height:11px;border-radius:50%;background:#fff"></div>
<div class="t" style="left:1178px;top:54px;font-size:12.9px;color:#8a8a8a">MAC – Reserved</div>
<svg class="ab" style="left:1160px;top:91px" width="8" height="8"><path d="M7.5 0V7.5H0Z" fill="#444"/></svg>
<div class="pv" style="left:1177px;top:86px;color:#000">Frame Information: (10 bytes)</div>
<div class="pv" style="left:1201px;top:106px;color:#000">Packet Number: 58319</div>
<div class="pv" style="left:1201px;top:126px;color:#000">Protocol: ZigBee</div>
<div class="pv" style="left:1201px;top:146px;color:#000">Timestamp: 16:46:31.532287</div>
<div class="pv" style="left:1201px;top:166px;color:#000">Time Delta: 0.049800</div>
<div class="pv" style="left:1201px;top:186px;color:#000">Channel: 15</div>
<div class="pv" style="left:1201px;top:206px;color:#000">Length: 10</div>
<div class="pv" style="left:1201px;top:226px;color:#000">Link Quality: -4 dBm</div>
<div class="pv" style="left:1201px;top:246px;color:#000">Source: TICC2532 Sniffer</div>
<div class="pv" style="left:1201px;top:266px;color:#000">Status: ExhaustedData</div>
<svg class="ab" style="left:1160px;top:291px" width="8" height="8"><path d="M7.5 0V7.5H0Z" fill="#444"/></svg>
<div class="pv" style="left:1177px;top:286px;color:#d4410f">MAC Header: (9 bytes)</div>
<svg class="ab" style="left:1184px;top:311px" width="8" height="8"><path d="M7.5 0V7.5H0Z" fill="#444"/></svg>
<div class="pv" style="left:1201px;top:306px;color:#d4410f">Frame Control: 0xAA55</div>
<div class="pv" style="left:1225px;top:326px;color:#d4410f">···· ···· ···· ·101 = Frame Type: [0x5] Reserved</div>
<div class="pv" style="left:1225px;top:346px;color:#d4410f">···· ···· ···· 0··· = Security Enabled: [0x0] No</div>
<div class="pv" style="left:1225px;top:366px;color:#d4410f">···· ···· ···1 ···· = Frame Pending: [0x1] Yes</div>
<div class="pv" style="left:1225px;top:386px;color:#d4410f">···· ···· ··0· ···· = Acknowledgement Request: [0x0] No</div>
<div class="pv" style="left:1225px;top:406px;color:#d4410f">···· ···· ·1·· ···· = Intra-PAN: [0x1] Yes</div>
<div class="pv" style="left:1225px;top:426px;color:#d4410f">···· ··10 0··· ···· = Reserved: 0x4</div>
<div class="pv" style="left:1225px;top:446px;color:#d4410f">···· 10·· ···· ···· = Destination Addr Mode: [0x2] 16-bit Short Address</div>
<div class="pv" style="left:1225px;top:466px;color:#d4410f">··10 ···· ···· ···· = Reserved: 0x2</div>
<div class="pv" style="left:1224px;top:486px;color:#d4410f">10·· ···· ···· ···· = Source Addr Mode: [0x2] 16-bit Short Address</div>
<div class="pv" style="left:1201px;top:506px;color:#d4410f">Sequence Number: 0</div>
<div class="pv" style="left:1201px;top:526px;color:#d4410f">Destination PAN ID: 0x00FB</div>
<div class="pv" style="left:1201px;top:546px;color:#d4410f">Destination Address: 0x0001</div>
<div class="pv" style="left:1201px;top:566px;color:#d4410f">Source Address: 0xFFFD</div>
<svg class="ab" style="left:1160px;top:591px" width="8" height="8"><path d="M7.5 0V7.5H0Z" fill="#444"/></svg>
<div class="pv" style="left:1177px;top:586px;color:#d4410f">MAC Footer: (exhausted data)</div>
<div class="pv" style="left:1201px;top:606px;color:#d4410f">Frame Check Sequence: (exhausted data)</div>
</body></html>
